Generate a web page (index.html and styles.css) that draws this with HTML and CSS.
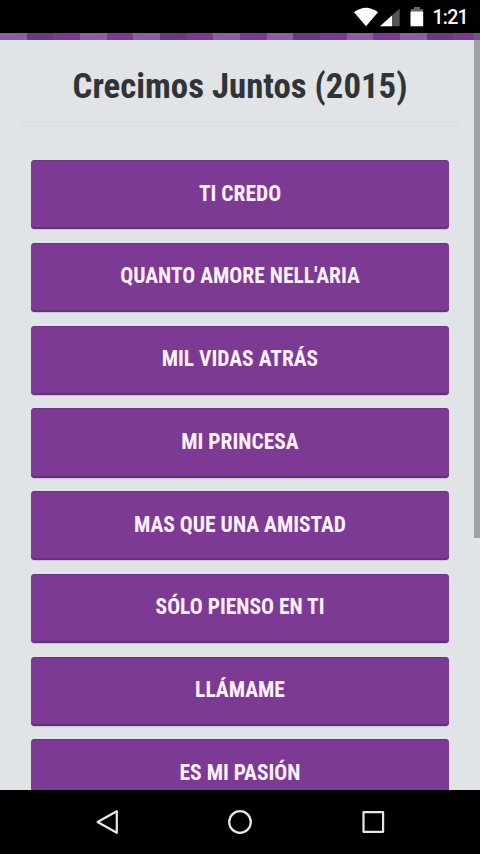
FILE: index.html
```
<!DOCTYPE html>
<html lang="es">
<head>
    <meta charset="UTF-8">
    <meta name="viewport" content="width=device-width, initial-scale=1.0">
    <title>Crecimos Juntos (2015)</title>
    <link rel="stylesheet" href="styles.css">
</head>
<body>
    <div class="status-bar">
        <svg class="status-icons" width="78" height="34" viewBox="0 0 78 34">
            <path d="M3 12.3Q15 3 27 12.3L15 26.3Z" fill="#fff"/>
            <path d="M48.7 8.5V26.3H29Z" fill="#555"/>
            <path d="M41 15.5V26.3H29Z" fill="#fff"/>
            <path d="M63 7h6v2h3v3H60V9h3Z" fill="#666"/>
            <path d="M59.5 11.5h12.7v14.8H59.5Z" fill="#fff"/>
        </svg>
        <span class="clock">1:21</span>
    </div>

    <div class="page">
        <div class="stripes"></div>
        <h1>Crecimos Juntos (2015)</h1>
        <hr>
        <div class="song-list">
            <a href="#" class="song">Ti credo</a>
            <a href="#" class="song">Quanto amore nell'aria</a>
            <a href="#" class="song">Mil vidas atrás</a>
            <a href="#" class="song">Mi princesa</a>
            <a href="#" class="song">Mas que una amistad</a>
            <a href="#" class="song">Sólo pienso en ti</a>
            <a href="#" class="song">Llámame</a>
            <a href="#" class="song">Es mi pasión</a>
        </div>
        <div class="scrollbar"></div>
    </div>

    <div class="nav-bar">
        <svg width="26" height="26" viewBox="0 0 26 26"><path d="M22.8 2.2V23.8L3.6 13Z"/></svg>
        <svg width="26" height="26" viewBox="0 0 26 26"><circle cx="13" cy="13" r="10.8"/></svg>
        <svg width="26" height="26" viewBox="0 0 26 26"><path d="M3.5 3.2h19.6v19.6H3.5Z"/></svg>
    </div>
</body>
</html>
```

FILE: styles.css
```
body {
    margin: 0;
    height: 854px;
    display: flex;
    flex-direction: column;
    overflow: hidden;
    background-color: #000;
    font-family: "Roboto Condensed", Roboto, sans-serif;
}

.status-bar {
    height: 33px;
    flex: none;
    display: flex;
    justify-content: flex-end;
    box-sizing: border-box;
    padding-right: 12px;
    color: #fff;
}

.clock {
    width: 39px;
    font: 500 19.5px/36px Roboto, sans-serif;
    letter-spacing: -0.7px;
    text-align: right;
}

.page {
    position: relative;
    flex: 1;
    min-height: 0;
    overflow: hidden;
    background-color: #e0e4e7;
}

.stripes {
    height: 7px;
    background: repeating-linear-gradient(90deg,
        #8c5fa5 0, #8c5fa5 26.67px,
        #683a82 26.67px, #683a82 53.33px,
        #7b3b93 53.33px, #7b3b93 80px,
        #8c5fa5 80px, #8c5fa5 106.67px,
        #7b3b93 106.67px, #7b3b93 133.33px);
}

h1 {
    margin: 0;
    padding-top: 25px;
    height: 56px;
    font-size: 34.8px;
    line-height: 42px;
    font-weight: 700;
    font-stretch: 75%;
    text-align: center;
    color: #303436;
}

hr {
    height: 3px;
    margin: 0 20px;
    border: 0;
    border-top: 1px solid #dcdfe1;
    border-bottom: 1px solid #dbdee0;
}

.song-list {
    padding: 34px 31px 0;
}

.song {
    display: block;
    box-sizing: border-box;
    height: 69.25px;
    margin-bottom: 13.5px;
    padding-top: 20.5px;
    border-radius: 4px;
    background-color: #7d3a94;
    box-shadow: inset 0 -2px 0 #64307a, inset 0 1px 0 #6d3484, 0 1px 1px #c9bfd2;
    color: #fdf0ff;
    font-size: 21.5px;
    line-height: 26px;
    font-weight: 700;
    font-stretch: 75%;
    text-align: center;
    text-transform: uppercase;
    text-decoration: none;
}

.scrollbar {
    position: absolute;
    top: 0;
    right: 0;
    width: 6px;
    height: 505px;
    background-color: rgba(105, 109, 112, 0.55);
}

.nav-bar {
    height: 64px;
    flex: none;
    display: flex;
    justify-content: center;
    align-items: center;
    gap: 107px;
}

.nav-bar svg {
    fill: none;
    stroke: #e8e8e8;
    stroke-width: 2.2;
    stroke-linejoin: round;
}
```
